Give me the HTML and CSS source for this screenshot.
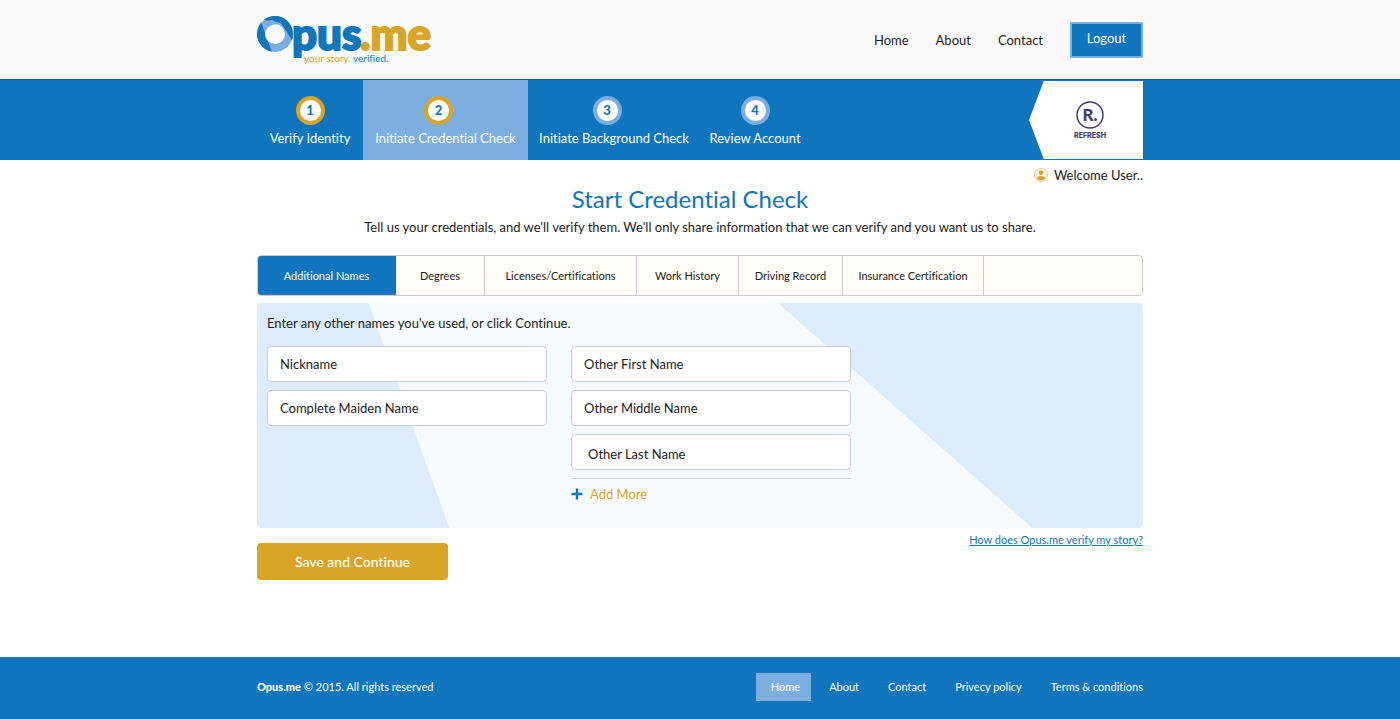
FILE: index.html
```html
<!DOCTYPE html>
<html lang="en">
<head>
	<meta charset="utf-8">
	<title>Opus.me - Start Credential Check</title>
	<meta name="viewport" content="width=device-width, initial-scale=1">
	<link rel="stylesheet" href="styles.css">
</head>
<body>
<header class="header">
	<div class="container header-row">
		<a href="#" class="logo" aria-label="Opus.me">
			<svg width="180" height="70" viewBox="0 -10 180 70">
				<clipPath id="ring"><circle cx="18" cy="19" r="18"/></clipPath>
				<g clip-path="url(#ring)">
					<circle cx="18" cy="19" r="18" fill="#7cafe0"/>
					<path d="M0 8L4 7L16 40H0Z" fill="#0f75bc"/>
					<path d="M6 0H40V34L33 22L24 8L7 5Z" fill="#0f75bc"/>
				</g>
				<circle cx="18" cy="19" r="10" fill="#fafafa"/>
				<path d="M5 7L15 5L23 9Q12 8 8 17Z" fill="#7cafe0"/>
				<text x="35" y="35" class="logo-name logo-blue">pus</text>
				<text x="103" y="35" class="logo-name logo-gold">.me</text>
				<text x="47" y="47" class="logo-tag logo-gold">your story. <tspan class="logo-blue">verified.</tspan></text>
			</svg>
		</a>
		<nav class="main-nav">
			<a href="#">Home</a>
			<a href="#">About</a>
			<a href="#">Contact</a>
			<button type="button" class="btn-logout">Logout</button>
		</nav>
	</div>
</header>

<div class="steps-bar">
	<div class="container steps-row">
		<nav class="steps">
			<a href="#" class="step done"><span class="step-num">1</span>Verify Identity</a>
			<a href="#" class="step step-long done current"><span class="step-num">2</span>Initiate Credential Check</a>
			<a href="#" class="step step-long"><span class="step-num">3</span>Initiate Background Check</a>
			<a href="#" class="step"><span class="step-num">4</span>Review Account</a>
		</nav>
		<div class="partner">
			<svg width="44" height="40" viewBox="0 0 44 40">
				<circle cx="22" cy="15" r="13" fill="none" stroke="#453c68" stroke-width="1.5"/>
				<text x="22" y="21" text-anchor="middle" class="partner-r">R.</text>
				<text x="22" y="38" text-anchor="middle" class="partner-name">REFRESH</text>
			</svg>
		</div>
	</div>
</div>

<main class="container">
	<div class="welcome">
		<svg width="14" height="14" viewBox="0 0 14 14">
			<circle cx="7" cy="7" r="6.5" fill="#fff8e6" stroke="#e9cd85"/>
			<circle cx="7" cy="4.8" r="2.3" fill="#d8a526"/>
			<path d="M2.5 10.8 Q3 8 7 8 Q11 8 11.5 10.8 Q7 13.5 2.5 10.8Z" fill="#d8a526"/>
		</svg>
		Welcome User..
	</div>
	<h1>Start Credential Check</h1>
	<p class="intro">Tell us your credentials, and we'll verify them. We'll only share information that we can verify and you want us to share.</p>

	<div class="tabs" role="tablist">
		<button type="button" role="tab" class="tab active" aria-selected="true">Additional Names</button>
		<button type="button" role="tab" class="tab">Degrees</button>
		<button type="button" role="tab" class="tab">Licenses/Certifications</button>
		<button type="button" role="tab" class="tab">Work History</button>
		<button type="button" role="tab" class="tab">Driving Record</button>
		<button type="button" role="tab" class="tab">Insurance Certification</button>
	</div>

	<form>
		<div class="panel">
			<p class="panel-title">Enter any other names you've used, or click Continue.</p>
			<div class="fields">
				<div class="field-col">
					<input type="text" aria-label="Nickname" placeholder="Nickname">
					<input type="text" aria-label="Complete Maiden Name" placeholder="Complete Maiden Name">
				</div>
				<div class="field-col">
					<input type="text" aria-label="Other First Name" placeholder="Other First Name">
					<input type="text" aria-label="Other Middle Name" placeholder="Other Middle Name">
					<input type="text" class="last-name" aria-label="Other Last Name" placeholder="Other Last Name">
					<div class="add-row">
						<button type="button" class="btn-add">
							<svg width="12" height="12" viewBox="0 0 12 12"><path d="M6 0.5V11.5M0.5 6H11.5" stroke="#0f75bc" stroke-width="2.4"/></svg>
							Add More
						</button>
					</div>
				</div>
			</div>
		</div>
		<div class="actions">
			<button type="submit" class="btn-save">Save and Continue</button>
			<a href="#" class="help">How does Opus.me verify my story?</a>
		</div>
	</form>
</main>

<footer class="footer">
	<div class="container footer-row">
		<div><b>Opus.me</b> © 2015. All rights reserved</div>
		<nav class="footer-nav">
			<a href="#" class="current">Home</a>
			<a href="#">About</a>
			<a href="#">Contact</a>
			<a href="#">Privecy policy</a>
			<a href="#">Terms &amp; conditions</a>
		</nav>
	</div>
</footer>
</body>
</html>
```
FILE: styles.css
```css
* {
	box-sizing: border-box;
}

body {
	margin: 0;
	min-height: 100vh;
	display: flex;
	flex-direction: column;
	background: #fff;
	color: #1c1c1c;
	font: 13px/20px Lato, sans-serif;
	font-variant-ligatures: none;
}

a {
	color: inherit;
	text-decoration: none;
}

button, input {
	font: inherit;
	font-variant-ligatures: none;
	color: inherit;
}

button {
	cursor: pointer;
}

.container {
	width: 100%;
	max-width: 886px;
	margin: 0 auto;
}

/* header */
.header {
	background: #fafafa;
	border-bottom: 1px solid #0b5c98;
}

.header-row {
	height: 79px;
	display: flex;
	justify-content: space-between;
	align-items: center;
}

.logo svg {
	display: block;
}

.logo-name {
	font-weight: 900;
	font-size: 44px;
	stroke-width: 2;
}

.logo-tag {
	font-size: 10px;
}

.logo-blue {
	fill: #0f75bc;
}

.logo-gold {
	fill: #d8a526;
}

.logo-name.logo-blue {
	stroke: #0f75bc;
}

.logo-name.logo-gold {
	stroke: #d8a526;
}

.main-nav {
	display: flex;
	align-items: center;
	gap: 27px;
}

.btn-logout {
	width: 73px;
	height: 36px;
	padding: 0 0 4px;
	background: #0f75bc;
	border: 2px solid #7cafe0;
	color: #fff;
}

/* steps */
.steps-bar {
	background: #0f75bc;
	color: #fff;
}

.steps-row {
	display: flex;
	justify-content: space-between;
}

.steps {
	display: grid;
	grid-template-columns: 106px 165px 172px 110px;
}

.step {
	height: 80px;
	padding-top: 16px;
	display: flex;
	flex-direction: column;
	align-items: center;
	gap: 3px;
	white-space: nowrap;
}

.step.current {
	background: #7cafe0;
}

.step-num {
	width: 29px;
	height: 29px;
	border: 4px solid #7cafe0;
	border-radius: 50%;
	background: #fff;
	color: #0f75bc;
	font-weight: 900;
	line-height: 21px;
	text-align: center;
}

.step.done .step-num {
	border-color: #d8a526;
}

.step-long .step-num {
	margin-right: 14px;
}

.partner {
	width: 114px;
	margin: 1px 0;
	padding-left: 8px;
	display: flex;
	align-items: center;
	justify-content: center;
	background: #fff;
	clip-path: polygon(13% 0, 100% 0, 100% 100%, 13% 100%, 0 50%);
}

.partner-r {
	font-size: 17px;
	font-weight: 900;
	fill: #453c68;
}

.partner-name {
	font-family: Inter, sans-serif;
	font-size: 7px;
	font-weight: 800;
	fill: #453c68;
}

/* content */
.welcome {
	display: flex;
	justify-content: flex-end;
	align-items: center;
	gap: 6px;
	padding-top: 5px;
}

h1 {
	margin: 0;
	padding-right: 20px;
	color: #0f75bc;
	font-size: 24px;
	font-weight: 400;
	line-height: 28px;
	text-align: center;
}

.intro {
	margin: 4px 0 18px;
	text-align: center;
}

.tabs {
	display: grid;
	grid-template-columns: 138px 89px 152px 102px 104px 141px;
	height: 41px;
	background: #fffdf6;
	border: 1px solid #ccc;
	border-radius: 4px;
	overflow: hidden;
}

.tab {
	padding: 1px 0 0;
	background: none;
	border: 0;
	border-right: 1px solid #ccc;
	font-size: 11px;
}

.tab.active {
	background: #0f75bc;
	border-color: #0f75bc;
	color: #fff;
}

.panel {
	position: relative;
	margin-top: 7px;
	padding: 10px 10px 24px;
	background: #dcecfb;
	border-radius: 4px;
	overflow: hidden;
}

/* light band across the panel */
.panel::before {
	content: "";
	position: absolute;
	inset: 0;
	background: #f5fbff;
	clip-path: polygon(12.6% 0, 58.8% 0, 87.5% 100%, 21.7% 100%);
}

.panel-title,
.fields {
	position: relative;
	margin: 0;
}

.fields {
	display: flex;
	gap: 24px;
	margin-top: 13px;
}

.field-col {
	display: flex;
	flex-direction: column;
	gap: 8px;
	width: 280px;
}

.field-col input {
	width: 100%;
	height: 36px;
	padding: 0 12px;
	background: #fff;
	border: 1px solid #ccc;
	border-radius: 4px;
}

.field-col .last-name {
	padding: 3px 16px 0;
}

.field-col input::placeholder {
	color: #1c1c1c;
	opacity: 1;
}

.add-row {
	padding-top: 5px;
	border-top: 1px solid #d3dbe2;
}

.btn-add {
	display: flex;
	align-items: center;
	gap: 7px;
	padding: 0;
	background: none;
	border: 0;
	color: #d8a526;
}

.actions {
	display: flex;
	justify-content: space-between;
	align-items: flex-start;
	padding: 2px 0 24px;
}

.btn-save {
	width: 191px;
	height: 37px;
	margin-top: 13px;
	background: #d8a526;
	border: 0;
	border-radius: 4px;
	color: #fff;
	font-size: 14px;
	font-weight: 500;
}

.help {
	color: #0f75bc;
	font-size: 11px;
	text-decoration: underline;
}

/* footer */
.footer {
	margin-top: auto;
	background: #0f75bc;
	color: #fff;
	font-size: 11px;
}

.footer-row {
	height: 62px;
	padding-bottom: 2px;
	display: flex;
	justify-content: space-between;
	align-items: center;
}

.footer b {
	font-weight: 900;
}

.footer-nav {
	display: flex;
	align-items: center;
	gap: 29px;
}

.footer-nav .current {
	margin-right: -11px;
	padding: 4px 11px 4px 15px;
	background: #7cafe0;
}
```
